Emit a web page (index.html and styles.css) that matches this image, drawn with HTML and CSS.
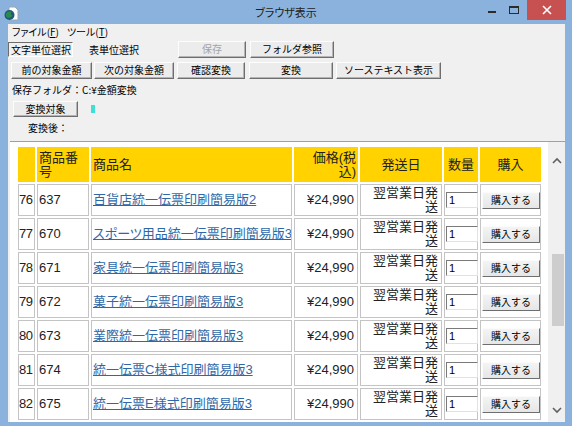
FILE: index.html
```html
<!DOCTYPE html>
<html lang="ja">
<head>
  <meta charset="UTF-8">
  <title>ブラウザ表示</title>
  <link rel="stylesheet" href="styles.css">
</head>
<body>
  <div class="window">
    <div class="titlebar">
      <svg class="app-icon" width="16" height="16" viewBox="0 0 16 16">
        <path d="M6 2h6l3 3v10H6z" fill="#fff" stroke="#9aa7b3" stroke-width="1"/>
        <circle cx="6.5" cy="10" r="5" fill="#1d5a7a"/>
        <path d="M3 8.5c1.5-2 4-2.5 5.5-1.5-1 1.5-0.5 3 1 3.5-1.5 2-4 3-5.5 2C3 11 2.5 10 3 8.5z" fill="#2e8a4c"/>
      </svg>
      <div class="title">ブラウザ表示</div>
      <div class="controls">
        <span class="ctl">
          <svg width="10" height="10"><rect x="1" y="6" width="8" height="2" fill="#2b2b2b"/></svg>
        </span>
        <span class="ctl">
          <svg width="10" height="10"><rect x="0.5" y="1.5" width="9" height="7" fill="none" stroke="#2b2b2b"/><rect x="0" y="1" width="10" height="2" fill="#2b2b2b"/></svg>
        </span>
        <span class="ctl close">
          <svg width="10" height="10"><path d="M1 1L9 9M9 1L1 9" stroke="#fff" stroke-width="1.6"/></svg>
        </span>
      </div>
    </div>

    <div class="frame">
      <div class="client">
        <div class="menubar">
          <span>ファイル(<u>F</u>)</span>
          <span>ツール(<u>T</u>)</span>
        </div>

        <div class="toolrow">
          <span class="tab active">文字単位選択</span>
          <span class="tab">表単位選択</span>
          <button class="btn w-save" disabled>保存</button>
          <button class="btn w-folder">フォルダ参照</button>
        </div>

        <div class="toolrow second">
          <button class="btn w-prev">前の対象金額</button>
          <button class="btn w-next">次の対象金額</button>
          <button class="btn w-save">確認変換</button>
          <button class="btn w-folder">変換</button>
          <button class="btn w-source">ソーステキスト表示</button>
        </div>

        <div class="folder">保存フォルダ：C:¥金額変換</div>

        <div class="target">
          <button class="btn w-target">変換対象</button>
          <span class="caret"></span>
        </div>

        <div class="after">変換後：</div>

        <div class="browser">
          <div class="page">
            <table class="goods">
              <tr>
                <th class="c-no"></th>
                <th class="c-code left">商品番号</th>
                <th class="c-name left">商品名</th>
                <th class="c-price right">価格(税込)</th>
                <th class="c-ship">発送日</th>
                <th class="c-qty">数量</th>
                <th class="c-buy">購入</th>
              </tr>
              <tr>
                <td class="num">76</td><td>637</td>
                <td class="name"><a href="#">百貨店統一伝票印刷簡易版2</a></td>
                <td class="right">¥24,990</td>
                <td class="right">翌営業日発送</td>
                <td><input class="qty" type="text" value="1"></td>
                <td class="center"><button class="buy">購入する</button></td>
              </tr>
              <tr>
                <td class="num">77</td><td>670</td>
                <td class="name"><a href="#">スポーツ用品統一伝票印刷簡易版3</a></td>
                <td class="right">¥24,990</td>
                <td class="right">翌営業日発送</td>
                <td><input class="qty" type="text" value="1"></td>
                <td class="center"><button class="buy">購入する</button></td>
              </tr>
              <tr>
                <td class="num">78</td><td>671</td>
                <td class="name"><a href="#">家具統一伝票印刷簡易版3</a></td>
                <td class="right">¥24,990</td>
                <td class="right">翌営業日発送</td>
                <td><input class="qty" type="text" value="1"></td>
                <td class="center"><button class="buy">購入する</button></td>
              </tr>
              <tr>
                <td class="num">79</td><td>672</td>
                <td class="name"><a href="#">菓子統一伝票印刷簡易版3</a></td>
                <td class="right">¥24,990</td>
                <td class="right">翌営業日発送</td>
                <td><input class="qty" type="text" value="1"></td>
                <td class="center"><button class="buy">購入する</button></td>
              </tr>
              <tr>
                <td class="num">80</td><td>673</td>
                <td class="name"><a href="#">業際統一伝票印刷簡易版3</a></td>
                <td class="right">¥24,990</td>
                <td class="right">翌営業日発送</td>
                <td><input class="qty" type="text" value="1"></td>
                <td class="center"><button class="buy">購入する</button></td>
              </tr>
              <tr>
                <td class="num">81</td><td>674</td>
                <td class="name"><a href="#">統一伝票C様式印刷簡易版3</a></td>
                <td class="right">¥24,990</td>
                <td class="right">翌営業日発送</td>
                <td><input class="qty" type="text" value="1"></td>
                <td class="center"><button class="buy">購入する</button></td>
              </tr>
              <tr>
                <td class="num">82</td><td>675</td>
                <td class="name"><a href="#">統一伝票E様式印刷簡易版3</a></td>
                <td class="right">¥24,990</td>
                <td class="right">翌営業日発送</td>
                <td><input class="qty" type="text" value="1"></td>
                <td class="center"><button class="buy">購入する</button></td>
              </tr>
            </table>
          </div>

          <div class="vscroll">
            <svg class="arrow up" width="10" height="8"><path d="M1 6L5 2L9 6" fill="none" stroke="#606060" stroke-width="1.6"/></svg>
            <div class="thumb"></div>
            <svg class="arrow down" width="10" height="8"><path d="M1 2L5 6L9 2" fill="none" stroke="#606060" stroke-width="1.6"/></svg>
          </div>
        </div>
      </div>
    </div>
  </div>
</body>
</html>
```

FILE: styles.css
```css
* {
  box-sizing: border-box;
}

body {
  margin: 0;
  font-family: "Noto Sans CJK JP", sans-serif;
  font-size: 10px;
  color: #000;
  background: #8ab2dd;
}

.window {
  width: 572px;
  height: 426px;
  display: flex;
  flex-direction: column;
  background: #8ab2dd;
  overflow: hidden;
}

/* タイトルバー */
.titlebar {
  height: 24px;
  display: grid;
  grid-template-columns: 1fr auto 1fr;
  align-items: center;
}

.app-icon {
  margin: 2px 0 0 3px;
}

.title {
  font-size: 11px;
  font-feature-settings: "palt";
  color: #1e1e1e;
  line-height: 24px;
}

.controls {
  justify-self: end;
  align-self: start;
  display: flex;
  margin-right: 6px;
}

.ctl {
  height: 20px;
  width: 22px;
  display: flex;
  align-items: center;
  justify-content: center;
}

.close {
  width: 39px;
  margin-left: 2px;
  background: #c75050;
}

.frame {
  flex: 1;
  display: flex;
  padding: 0 7px 8px 8px;
}

.client {
  flex: 1;
  display: flex;
  flex-direction: column;
  background: #f0f0f0;
  overflow: hidden;
}

/* メニューとボタン */
.menubar {
  height: 16px;
  display: flex;
  gap: 8px;
  padding-left: 4px;
  align-items: center;
  font-feature-settings: "palt";
  line-height: 16px;
}

.toolrow {
  display: flex;
  align-items: center;
  height: 18px;
  white-space: nowrap;
}

.toolrow.second {
  margin-top: 3px;
}

.tab {
  height: 15px;
  line-height: 13px;
  padding: 0 2px;
  border: 1px solid transparent;
}

.tab.active {
  width: 65px;
  border-color: #6d6d6d #fff #fff #6d6d6d;
}

.tab + .tab {
  width: 87px;
  margin-left: 15px;
  padding: 0;
}

.btn {
  height: 17px;
  padding: 0;
  font-family: inherit;
  font-size: 10px;
  line-height: 14px;
  color: #000;
  background: #ececec;
  border: 1px solid;
  border-color: #fdfdfd #6e6e6e #6e6e6e #fdfdfd;
  box-shadow: inset -1px -1px 0 #b4b4b4;
}

.btn:disabled {
  color: #a3a3a3;
}

.w-prev {
  width: 81px;
  margin-left: 3px;
}

.w-next {
  width: 80px;
  margin-left: 2px;
}

.w-save {
  width: 68px;
  margin-left: 3px;
}

.w-folder {
  width: 84px;
  margin-left: 4px;
}

.w-source {
  width: 105px;
  margin-left: 3px;
}

.folder {
  height: 16px;
  margin-top: 3px;
  padding-left: 4px;
  line-height: 16px;
}

.target {
  display: flex;
  align-items: center;
  margin-top: 3px;
  height: 16px;
}

.w-target {
  width: 65px;
  height: 16px;
  margin-left: 5px;
}

.caret {
  width: 4px;
  height: 8px;
  margin-left: 13px;
  background: #3de0d6;
}

.after {
  height: 16px;
  margin-top: 3px;
  padding-left: 20px;
  line-height: 16px;
}

/* ブラウザ部分 */
.browser {
  flex: 1;
  display: flex;
  margin: 5px 0 0 2px;
  border-top: 1px solid #a0a0a0;
  overflow: hidden;
}

.page {
  flex: 1;
  background: #fff;
  padding: 3px 0 0 6px;
  overflow: hidden;
}

.goods {
  border-collapse: separate;
  border-spacing: 2px;
  table-layout: fixed;
  width: 527px;
  font-family: "Liberation Sans", "Noto Sans CJK JP", sans-serif;
  font-size: 13px;
  line-height: 14px;
  color: #222;
}

.goods th,
.goods td {
  border: 1px solid #c4c4c4;
  padding: 0 1px;
  vertical-align: middle;
}

.goods th {
  height: 35px;
  background: #ffd200;
  font-weight: normal;
  text-align: center;
  border-color: #ffd200;
}

.goods td {
  height: 32px;
  text-align: left;
}

.goods .left {
  text-align: left;
}

.goods .right {
  text-align: right;
}

.goods .center {
  text-align: center;
}

.goods td.num {
  padding: 0;
  letter-spacing: -0.5px;
}

.goods td.name {
  white-space: nowrap;
  overflow: hidden;
}

.c-no { width: 17px; }
.c-code { width: 52px; }
.c-name { width: 201px; }
.c-price { width: 64px; }
.c-ship { width: 82px; }
.c-qty { width: 34px; }
.c-buy { width: 61px; }

.goods td.right {
  padding-right: 3px;
}

.goods a {
  color: #2f68a8;
  text-decoration: underline;
  font-feature-settings: "palt";
}

.qty {
  width: 32px;
  height: 16px;
  padding: 0 2px;
  font-family: "Liberation Sans", sans-serif;
  font-size: 11px;
  border: 1px solid;
  border-color: #7a7a7a #e2e2e2 #e2e2e2 #7a7a7a;
  background: #fff;
}

.buy {
  width: 58px;
  height: 17px;
  padding: 0;
  font-family: "Noto Sans CJK JP", sans-serif;
  font-size: 10px;
  line-height: 14px;
  background: linear-gradient(#f4f4f4, #e6e6e6);
  border: 1px solid;
  border-color: #fbfbfb #6e6e6e #6e6e6e #fbfbfb;
}

.vscroll {
  width: 17px;
  background: #f0f0f0;
  display: flex;
  flex-direction: column;
  align-items: center;
}

.arrow.up {
  margin-top: 15px;
}

.thumb {
  width: 12px;
  height: 72px;
  margin: 89px 0 0 2px;
  background: #cdcdcd;
}

.arrow.down {
  margin-top: auto;
  margin-bottom: 8px;
}
```
